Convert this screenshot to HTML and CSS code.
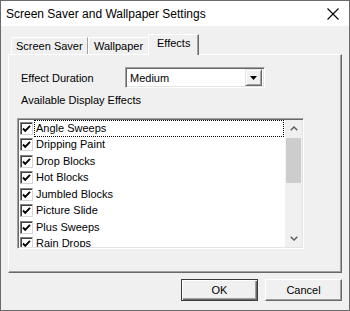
FILE: index.html
```html
<!DOCTYPE html>
<html lang="en">

<head>
    <meta charset="UTF-8">
    <title>Screen Saver and Wallpaper Settings</title>
    <link rel="stylesheet" href="styles.css">
</head>

<body>
    <div class="window">
        <div class="titlebar">
            <span class="title">Screen Saver and Wallpaper Settings</span>
            <svg class="close" width="12" height="12" viewBox="0 0 12 12">
                <path d="M0.5 0.5 L11.5 11.5 M11.5 0.5 L0.5 11.5" stroke="#000" stroke-width="1.1" fill="none" />
            </svg>
        </div>

        <div class="client">
            <div class="tabs">
                <div class="tab tab-first">Screen Saver</div>
                <div class="tab">Wallpaper</div>
                <div class="tab tab-active">Effects</div>
            </div>

            <div class="panel">
                <div class="duration">
                    <span class="label">Effect Duration</span>
                    <div class="combo">
                        <span class="combo-text">Medium</span>
                        <span class="combo-btn">
                            <svg width="7" height="4" viewBox="0 0 7 4">
                                <path d="M0 0 H7 L3.5 4 Z" fill="#000" />
                            </svg>
                        </span>
                    </div>
                </div>

                <div class="section-label">Available Display Effects</div>

                <div class="listbox">
                    <div class="items">
                        <div class="item">
                            <span class="check"><svg width="11" height="11" viewBox="0 0 11 11"><path d="M2 5.5 L4.2 7.8 L9 2.8" stroke="#000" stroke-width="1.9" fill="none" /></svg></span>
                            <span class="item-text focused">Angle Sweeps</span>
                        </div>
                        <div class="item">
                            <span class="check"><svg width="11" height="11" viewBox="0 0 11 11"><path d="M2 5.5 L4.2 7.8 L9 2.8" stroke="#000" stroke-width="1.9" fill="none" /></svg></span>
                            <span class="item-text">Dripping Paint</span>
                        </div>
                        <div class="item">
                            <span class="check"><svg width="11" height="11" viewBox="0 0 11 11"><path d="M2 5.5 L4.2 7.8 L9 2.8" stroke="#000" stroke-width="1.9" fill="none" /></svg></span>
                            <span class="item-text">Drop Blocks</span>
                        </div>
                        <div class="item">
                            <span class="check"><svg width="11" height="11" viewBox="0 0 11 11"><path d="M2 5.5 L4.2 7.8 L9 2.8" stroke="#000" stroke-width="1.9" fill="none" /></svg></span>
                            <span class="item-text">Hot Blocks</span>
                        </div>
                        <div class="item">
                            <span class="check"><svg width="11" height="11" viewBox="0 0 11 11"><path d="M2 5.5 L4.2 7.8 L9 2.8" stroke="#000" stroke-width="1.9" fill="none" /></svg></span>
                            <span class="item-text">Jumbled Blocks</span>
                        </div>
                        <div class="item">
                            <span class="check"><svg width="11" height="11" viewBox="0 0 11 11"><path d="M2 5.5 L4.2 7.8 L9 2.8" stroke="#000" stroke-width="1.9" fill="none" /></svg></span>
                            <span class="item-text">Picture Slide</span>
                        </div>
                        <div class="item">
                            <span class="check"><svg width="11" height="11" viewBox="0 0 11 11"><path d="M2 5.5 L4.2 7.8 L9 2.8" stroke="#000" stroke-width="1.9" fill="none" /></svg></span>
                            <span class="item-text">Plus Sweeps</span>
                        </div>
                        <div class="item">
                            <span class="check"><svg width="11" height="11" viewBox="0 0 11 11"><path d="M2 5.5 L4.2 7.8 L9 2.8" stroke="#000" stroke-width="1.9" fill="none" /></svg></span>
                            <span class="item-text">Rain Drops</span>
                        </div>
                    </div>

                    <div class="scrollbar">
                        <div class="arrow">
                            <svg width="8" height="5" viewBox="0 0 8 5">
                                <path d="M0.7 4.3 L4 1 L7.3 4.3" stroke="#606060" stroke-width="1.5" fill="none" />
                            </svg>
                        </div>
                        <div class="track">
                            <div class="thumb"></div>
                        </div>
                        <div class="arrow">
                            <svg width="8" height="5" viewBox="0 0 8 5">
                                <path d="M0.7 0.7 L4 4 L7.3 0.7" stroke="#606060" stroke-width="1.5" fill="none" />
                            </svg>
                        </div>
                    </div>
                </div>
            </div>

            <div class="buttons">
                <button class="btn btn-default">OK</button>
                <button class="btn">Cancel</button>
            </div>
        </div>
    </div>
</body>

</html>
```

FILE: styles.css
```css
* {
    margin: 0;
    padding: 0;
    box-sizing: border-box;
}

body {
    width: 350px;
    height: 311px;
    overflow: hidden;
    font-family: "Liberation Sans", Arial, sans-serif;
    font-size: 11px;
    color: #000;
    background-color: #f0f0f0;
}

.window {
    width: 350px;
    height: 311px;
    border: 1px solid #6b6b6b;
    background-color: #f0f0f0;
    display: flex;
    flex-direction: column;
}

/* Title bar */
.titlebar {
    height: 25px;
    background-color: #fff;
    display: flex;
    align-items: center;
    justify-content: space-between;
    padding: 0 10px 0 5px;
    flex-shrink: 0;
}

.title {
    font-size: 12px;
    color: #000;
}

.close {
    display: block;
}

/* Client area */
.client {
    flex-grow: 1;
    padding: 8px 7px 0 7px;
    display: flex;
    flex-direction: column;
}

.tabs {
    height: 20px;
    display: flex;
    align-items: flex-end;
    padding-left: 3px;
}

.tab {
    height: 17px;
    padding: 1px 0 0 6px;
    display: flex;
    align-items: center;
    white-space: nowrap;
    border-top: 1px solid #fff;
    border-right: 1px solid #a0a0a0;
    box-shadow: 1px 0 0 #fff;
    line-height: 13px;
}

.tab-first {
    width: 77px;
    border-left: 1px solid #fff;
    padding-left: 4px;
}

.tab:nth-child(2) {
    width: 61px;
}

.tab-active {
    width: 51px;
    height: 21px;
    margin-left: -1px;
    margin-bottom: -1px;
    padding-left: 8px;
    align-items: flex-start;
    padding-top: 2px;
    border-left: 1px solid #fff;
    border-right: 1px solid #696969;
    box-shadow: inset -1px 0 0 #a0a0a0;
    background-color: #f0f0f0;
    position: relative;
    z-index: 1;
}

.panel {
    height: 219px;
    border-top: 1px solid #fff;
    border-left: 1px solid #fff;
    border-right: 1px solid #696969;
    border-bottom: 1px solid #696969;
    box-shadow: inset -1px -1px 0 #a0a0a0;
    padding: 12px 0 0 8px;
}

.duration {
    display: flex;
    align-items: center;
    height: 21px;
    padding-left: 4px;
}

.label {
    width: 104px;
}

.combo {
    width: 140px;
    height: 21px;
    background-color: #fff;
    border-top: 1px solid #a0a0a0;
    border-left: 1px solid #a0a0a0;
    border-right: 1px solid #fff;
    border-bottom: 1px solid #fff;
    box-shadow: inset 1px 1px 0 #696969, inset -1px -1px 0 #e3e3e3;
    display: flex;
    align-items: center;
    justify-content: space-between;
    padding: 2px 2px 2px 4px;
}

.combo-btn {
    width: 17px;
    height: 17px;
    background-color: #f0f0f0;
    border-top: 1px solid #e3e3e3;
    border-left: 1px solid #e3e3e3;
    border-right: 1px solid #696969;
    border-bottom: 1px solid #696969;
    box-shadow: inset 1px 1px 0 #fff, inset -1px -1px 0 #a0a0a0;
    display: flex;
    align-items: center;
    justify-content: center;
}

.combo-btn svg {
    display: block;
}

.section-label {
    height: 13px;
    line-height: 13px;
    margin-top: 6px;
    padding-left: 4px;
}

/* List box */
.listbox {
    width: 287px;
    height: 131px;
    margin-top: 11px;
    background-color: #fff;
    border-top: 1px solid #a0a0a0;
    border-left: 1px solid #a0a0a0;
    border-right: 1px solid #fff;
    border-bottom: 1px solid #fff;
    box-shadow: inset 1px 1px 0 #696969, inset -1px -1px 0 #e3e3e3;
    padding: 1px;
    display: flex;
    overflow: hidden;
}

.items {
    flex-grow: 1;
    overflow: hidden;
    padding: 0 1px 0 1px;
}

.item {
    height: 16.5px;
    display: flex;
    align-items: center;
}

.check {
    width: 13px;
    height: 13px;
    background-color: #fff;
    border-top: 1px solid #808080;
    border-left: 1px solid #808080;
    border-right: 1px solid #d4d4d4;
    border-bottom: 1px solid #d4d4d4;
    box-shadow: inset 1px 1px 0 #404040;
    display: flex;
    align-items: center;
    justify-content: center;
    flex-shrink: 0;
}

.check svg {
    display: block;
}

.item-text {
    margin-left: 1px;
    padding: 0 2px 0 1px;
    height: 17px;
    line-height: 15px;
    border: 1px solid transparent;
    flex-grow: 1;
    white-space: nowrap;
}

.item-text.focused {
    border: 1px dotted #000;
}

.scrollbar {
    width: 17px;
    flex-shrink: 0;
    background-color: #f0f0f0;
    display: flex;
    flex-direction: column;
}

.arrow {
    height: 17px;
    display: flex;
    align-items: center;
    justify-content: center;
}

.arrow svg {
    display: block;
}

.track {
    flex-grow: 1;
    padding: 1px 1px 0 1px;
}

.thumb {
    height: 45px;
    background-color: #cdcdcd;
}

/* Buttons */
.buttons {
    display: flex;
    justify-content: flex-end;
    gap: 7px;
    margin-top: 6px;
}

.btn {
    width: 77px;
    height: 22px;
    font-family: "Liberation Sans", Arial, sans-serif;
    font-size: 11px;
    color: #000;
    background-color: #f0f0f0;
    border-top: 1px solid #fff;
    border-left: 1px solid #fff;
    border-right: 1px solid #696969;
    border-bottom: 1px solid #696969;
    box-shadow: inset -1px -1px 0 #a0a0a0;
}

.btn-default {
    border: 1px solid #3c3c3c;
    box-shadow: inset 1px 1px 0 #fff, inset -1px -1px 0 #696969, inset -2px -2px 0 #a0a0a0;
}
```
